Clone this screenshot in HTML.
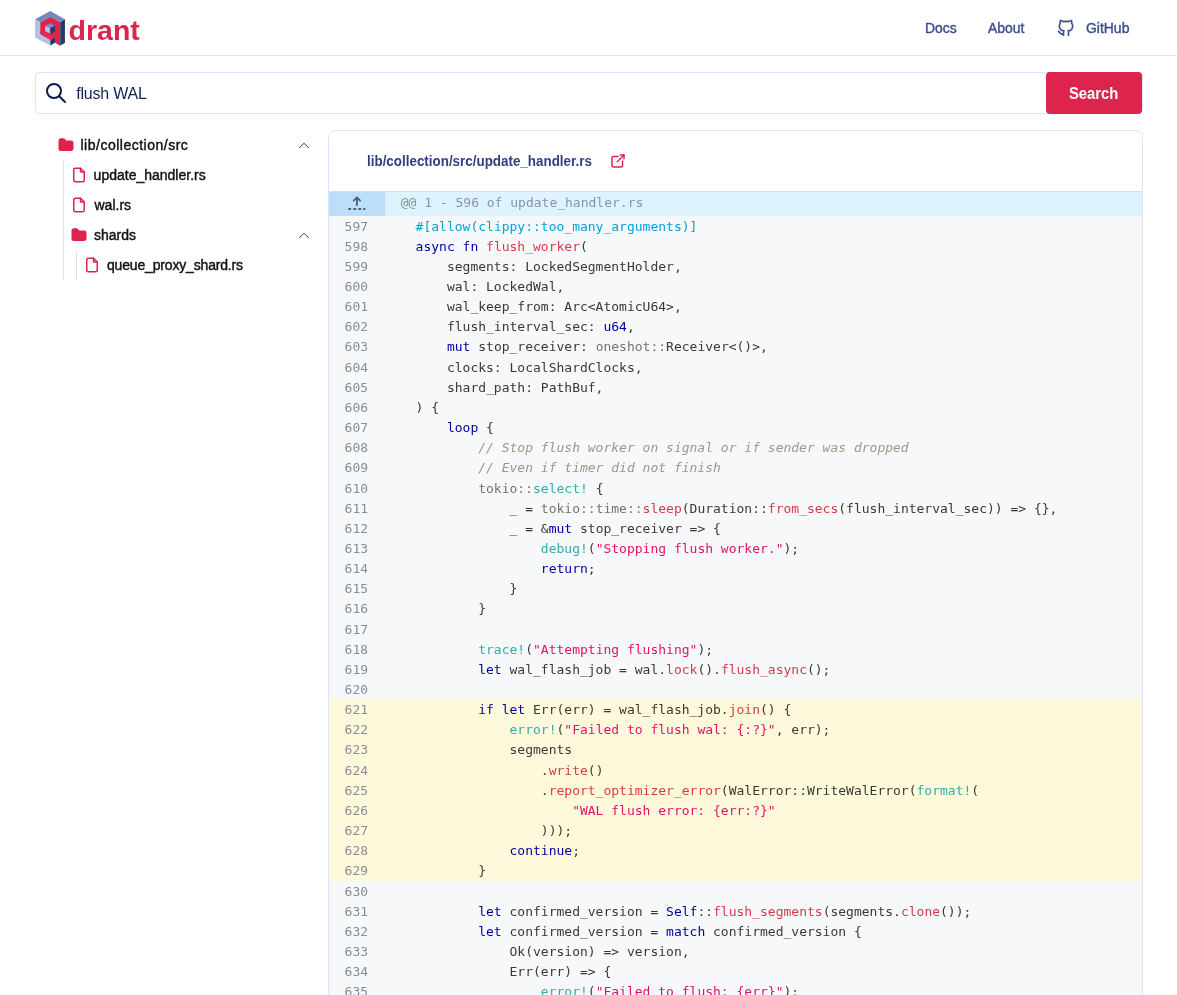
<!DOCTYPE html>
<html lang="en">
<head>
<meta charset="utf-8">
<title>Qdrant Code Search</title>
<style>
*{box-sizing:border-box;margin:0;padding:0}
html,body{width:1177px;height:995px;overflow:hidden;background:#fff}
body{font-family:"Liberation Sans",sans-serif;color:#111827;position:relative;will-change:transform;-webkit-font-smoothing:antialiased}
a{text-decoration:none;color:inherit}
/* header */
.hdr{position:absolute;left:0;top:0;width:1177px;height:56px;border-bottom:1px solid #dbe4ff;background:#fff}
.logo{position:absolute;left:35px;top:10px;width:110px;height:38px}
.logo svg{position:absolute;left:0;top:0}
.logo .wm{position:absolute;left:33.6px;top:6.2px;font-size:28.5px;line-height:28px;font-weight:700;color:#dc244c;letter-spacing:0}
.nav a{position:absolute;top:17.7px;height:20px;line-height:20px;font-size:14.6px;transform-origin:0 50%;transform:scaleX(.955);color:#39508d;-webkit-text-stroke:0.4px #39508d;white-space:nowrap}
.nav svg{position:absolute}
/* search */
.sbox{position:absolute;left:35px;top:72px;width:1108px;height:42px;border:1px solid #dbe4ff;border-radius:4px;background:#fff}
.sbox svg{position:absolute;left:8px;top:8px}
.sbox .q{position:absolute;left:40.2px;top:10.2px;font-size:16px;line-height:22px;color:#102252;white-space:nowrap;letter-spacing:-0.2px}
.sbtn{position:absolute;left:1046px;top:72px;width:96px;height:42px;background:#dc244c;border-radius:4px;color:#fff;font-weight:700;font-size:16px;line-height:42px;text-align:center}
.sbtn span{display:inline-block;transform:scaleX(.925);position:relative;top:1px}
/* tree */
.tree{position:absolute;left:35px;top:130px;width:290px;height:160px;font-size:14px;color:#111}
.tree .row{position:absolute;height:30px;line-height:30px;white-space:nowrap;-webkit-text-stroke:0.42px #111}
.tree .row svg{position:absolute;top:8px}
.tree .chev{position:absolute}
.tree .vline{position:absolute;width:1px;background:#dee2e6}
/* panel */
.panel{position:absolute;left:328px;top:130px;width:815px;height:900px;border:1px solid #dbe4ff;border-radius:8px;background:#fff;overflow:hidden}
.ptitle{position:absolute;left:38.4px;top:20px;transform-origin:0 50%;transform:scaleX(.957);font-size:14px;line-height:20px;font-weight:700;color:#2f3f86;white-space:nowrap}
.pext{position:absolute;left:279.5px;top:21px}
.exp{position:absolute;left:0;top:60px;width:813px;height:25px;background:#ddf4ff;border-top:1px solid #d0def7}
.exp .btn{position:absolute;left:0;top:0;width:56px;height:24px;background:#bbdefb}
.exp .txt{position:absolute;left:71.7px;top:1px;font:13px/20.15px "DejaVu Sans Mono","Liberation Mono",monospace;color:#8b949e;white-space:pre}
.code{position:absolute;left:0;top:85px;width:813px;height:820px;background:#f6f8fa;font:13px/20.15px "DejaVu Sans Mono","Liberation Mono",monospace;color:#393a34}
.code .hl{position:absolute;left:0;top:483px;width:813px;height:182px;background:#fff9db}
.code .ln{position:absolute;left:0;top:1px;width:56px;text-align:left;padding-left:15.6px;color:#868e96;white-space:pre}
.lines{position:absolute;left:0;top:0;width:813px}
.l{height:21px;white-space:pre;position:absolute;left:0;width:813px}
.l .no{position:absolute;left:15.6px;top:1px;color:#868e96}
.l .cd{position:absolute;left:55.3px;top:1px}
.k{color:#00009f}.f{color:#d73a49}.s{color:#e3116c}.m{color:#36acaa}.a{color:#00a4db}.c{color:#999988;font-style:italic}.n{opacity:.7}
</style>
</head>
<body>
<div class="hdr">
  <div class="logo">
    <svg width="34" height="38" viewBox="0 0 34 38"><defs><linearGradient id="lgA" x1="0" y1="0" x2="1" y2="0"><stop offset="0.2" stop-color="#dc244c"/><stop offset="1" stop-color="#ff2d5f"/></linearGradient><linearGradient id="lgB" x1="0" y1="0" x2="1" y2="0"><stop offset="0" stop-color="#ff2d5f"/><stop offset="0.8" stop-color="#dc244c"/></linearGradient></defs><polygon fill="#dc244c" points="15.30,6.80 25.22,12.00 25.22,35.84 20.02,32.77 20.02,27.11 15.30,30.17 5.15,24.27 5.15,12.23"/><polygon fill="url(#lgA)" points="5.15,20.50 15.30,26.40 15.30,30.17 5.15,24.27"/><polygon fill="url(#lgB)" points="15.30,26.40 20.02,23.56 20.02,27.11 15.30,30.17"/><polygon fill="#7589be" points="0.10,9.16 15.30,0.90 29.94,9.16 25.22,12.00 15.30,6.80 5.15,12.23"/><polygon fill="#b2bfe8" points="0.10,9.16 5.15,12.23 5.15,24.27 15.30,30.17 15.30,35.60 0.10,27.58"/><polygon fill="#24386c" points="25.22,12.00 29.94,9.16 29.94,32.77 25.22,35.84"/><polygon fill="#7589be" points="15.30,12.94 20.02,15.77 15.30,18.37 10.11,15.77"/><polygon fill="#b2bfe8" points="10.11,15.77 15.30,18.37 15.30,23.80 10.11,21.20"/><polygon fill="#24386c" points="15.30,18.37 20.02,15.77 20.02,21.44 15.30,23.80"/><polygon fill="#24386c" points="15.30,30.17 20.02,27.11 20.02,32.77 15.30,35.60"/></svg>
    <span class="wm">drant</span>
  </div>
  <div class="nav">
    <a style="left:924.6px">Docs</a>
    <a style="left:988.3px">About</a>
    <svg style="left:1056px;top:18px" width="20" height="20" viewBox="0 0 24 24" fill="none" stroke="#39508d" stroke-width="2" stroke-linecap="round" stroke-linejoin="round"><path d="M9 19c-4.3 1.4 -4.3 -2.500 -6 -3m12 5v-3.500c0 -1 .100 -1.400 -.500 -2c2.800 -.300 5.500 -1.400 5.500 -6a4.600 4.600 0 0 0 -1.300 -3.200a4.200 4.200 0 0 0 -.100 -3.200s-1.100 -.300 -3.500 1.300a12.300 12.300 0 0 0 -6.200 0c-2.400 -1.600 -3.500 -1.300 -3.500 -1.300a4.200 4.200 0 0 0 -.100 3.200a4.600 4.600 0 0 0 -1.300 3.200c0 4.600 2.700 5.700 5.500 6c-.600 .600 -.600 1.200 -.500 2v3.500"/></svg><a style="left:1086.2px">GitHub</a>
  </div>
</div>
<div class="sbox">
  <svg width="24" height="24" viewBox="0 0 24 24" fill="none" stroke="#0f1b4d" stroke-width="2" stroke-linecap="round" stroke-linejoin="round"><circle cx="10" cy="10" r="7"/><path d="M21 21l-6 -6"/></svg>
  <span class="q">flush WAL</span>
</div>
<div class="sbtn"><span>Search</span></div>
<div class="tree">
  <div class="vline" style="left:28px;top:30px;height:120px"></div>
  <div class="vline" style="left:41px;top:120px;height:30px"></div>
  <div class="row" style="left:0;top:0;width:290px"><svg style="left:22px;top:6px" width="18" height="18" viewBox="0 0 24 24" fill="#dc244c"><path d="M9 3a1 1 0 0 1 .608 .206l.1 .087l2.706 2.707h6.586a3 3 0 0 1 2.995 2.824l.005 .176v8a3 3 0 0 1 -2.824 2.995l-.176 .005h-14a3 3 0 0 1 -2.995 -2.824l-.005 -.176v-11a3 3 0 0 1 2.824 -2.995l.176 -.005h4z"/></svg><span style="position:absolute;left:45.5px;letter-spacing:.5px">lib/collection/src</span></div><svg class="chev" style="left:263px;top:11px" width="12" height="8" viewBox="0 0 12 8" fill="none" stroke="#333" stroke-width="1" stroke-linecap="round" stroke-linejoin="round"><path d="M1.5 6.7L6 2.2L10.5 6.7"/></svg>
  <div class="row" style="left:0;top:30px;width:290px"><svg style="left:35px;top:6px" width="18" height="18" viewBox="0 0 24 24" fill="none" stroke="#dc244c" stroke-width="2" stroke-linecap="round" stroke-linejoin="round"><path d="M14 3v4a1 1 0 0 0 1 1h4"/><path d="M17 21h-10a2 2 0 0 1 -2 -2v-14a2 2 0 0 1 2 -2h7l5 5v11a2 2 0 0 1 -2 2z"/></svg><span style="position:absolute;left:58.6px">update_handler.rs</span></div>
  <div class="row" style="left:0;top:60px;width:290px"><svg style="left:35px;top:6px" width="18" height="18" viewBox="0 0 24 24" fill="none" stroke="#dc244c" stroke-width="2" stroke-linecap="round" stroke-linejoin="round"><path d="M14 3v4a1 1 0 0 0 1 1h4"/><path d="M17 21h-10a2 2 0 0 1 -2 -2v-14a2 2 0 0 1 2 -2h7l5 5v11a2 2 0 0 1 -2 2z"/></svg><span style="position:absolute;left:59.5px">wal.rs</span></div>
  <div class="row" style="left:0;top:90px;width:290px"><svg style="left:35px;top:6px" width="18" height="18" viewBox="0 0 24 24" fill="#dc244c"><path d="M9 3a1 1 0 0 1 .608 .206l.1 .087l2.706 2.707h6.586a3 3 0 0 1 2.995 2.824l.005 .176v8a3 3 0 0 1 -2.824 2.995l-.176 .005h-14a3 3 0 0 1 -2.995 -2.824l-.005 -.176v-11a3 3 0 0 1 2.824 -2.995l.176 -.005h4z"/></svg><span style="position:absolute;left:59px">shards</span></div><svg class="chev" style="left:263px;top:101px" width="12" height="8" viewBox="0 0 12 8" fill="none" stroke="#333" stroke-width="1" stroke-linecap="round" stroke-linejoin="round"><path d="M1.5 6.7L6 2.2L10.5 6.7"/></svg>
  <div class="row" style="left:0;top:120px;width:290px"><svg style="left:48px;top:6px" width="18" height="18" viewBox="0 0 24 24" fill="none" stroke="#dc244c" stroke-width="2" stroke-linecap="round" stroke-linejoin="round"><path d="M14 3v4a1 1 0 0 0 1 1h4"/><path d="M17 21h-10a2 2 0 0 1 -2 -2v-14a2 2 0 0 1 2 -2h7l5 5v11a2 2 0 0 1 -2 2z"/></svg><span style="position:absolute;left:72px;letter-spacing:-.17px">queue_proxy_shard.rs</span></div>
</div>
<div class="panel">
  <div class="ptitle">lib/collection/src/update_handler.rs</div>
  <svg class="pext" width="18" height="18" viewBox="0 0 24 24" fill="none" stroke="#dc244c" stroke-width="2" stroke-linecap="round" stroke-linejoin="round"><path d="M12 6h-6a2 2 0 0 0 -2 2v10a2 2 0 0 0 2 2h10a2 2 0 0 0 2 -2v-6"/><path d="M11 13l9 -9"/><path d="M15 4h5v5"/></svg>
  <div class="exp"><div class="btn"><svg style="position:absolute;left:0;top:0" width="56" height="24" viewBox="0 0 56 24" fill="none" stroke="#57606a" stroke-width="1.9" stroke-linecap="round" stroke-linejoin="round"><path d="M27.9 13V5.6M24.7 8.6L27.9 5.400l3.200 3.200"/><path d="M19.25 16.900h17" stroke-dasharray="2.900 2.100" stroke-linecap="butt" stroke-width="2"/></svg></div><div class="txt">@@ 1 - 596 of update_handler.rs</div></div>
  <div class="code">
    <div class="hl"></div>
    <div class="lines">
<div class="l" style="top:0px"><span class="no">597</span><span class="cd">    <span class="a">#[allow(clippy::too_many_arguments)]</span></span></div>
<div class="l" style="top:20px"><span class="no">598</span><span class="cd">    <span class="k">async</span> <span class="k">fn</span> <span class="f">flush_worker</span>(</span></div>
<div class="l" style="top:40px"><span class="no">599</span><span class="cd">        segments: LockedSegmentHolder,</span></div>
<div class="l" style="top:60px"><span class="no">600</span><span class="cd">        wal: LockedWal,</span></div>
<div class="l" style="top:80px"><span class="no">601</span><span class="cd">        wal_keep_from: Arc&lt;AtomicU64&gt;,</span></div>
<div class="l" style="top:100px"><span class="no">602</span><span class="cd">        flush_interval_sec: <span class="k">u64</span>,</span></div>
<div class="l" style="top:120px"><span class="no">603</span><span class="cd">        <span class="k">mut</span> stop_receiver: <span class="n">oneshot::</span>Receiver&lt;()&gt;,</span></div>
<div class="l" style="top:141px"><span class="no">604</span><span class="cd">        clocks: LocalShardClocks,</span></div>
<div class="l" style="top:161px"><span class="no">605</span><span class="cd">        shard_path: PathBuf,</span></div>
<div class="l" style="top:181px"><span class="no">606</span><span class="cd">    ) {</span></div>
<div class="l" style="top:201px"><span class="no">607</span><span class="cd">        <span class="k">loop</span> {</span></div>
<div class="l" style="top:221px"><span class="no">608</span><span class="cd">            <span class="c">// Stop flush worker on signal or if sender was dropped</span></span></div>
<div class="l" style="top:241px"><span class="no">609</span><span class="cd">            <span class="c">// Even if timer did not finish</span></span></div>
<div class="l" style="top:262px"><span class="no">610</span><span class="cd">            <span class="n">tokio::</span><span class="m">select!</span> {</span></div>
<div class="l" style="top:282px"><span class="no">611</span><span class="cd">                _ = <span class="n">tokio::time::</span><span class="f">sleep</span>(Duration::<span class="f">from_secs</span>(flush_interval_sec)) =&gt; {},</span></div>
<div class="l" style="top:302px"><span class="no">612</span><span class="cd">                _ = &amp;<span class="k">mut</span> stop_receiver =&gt; {</span></div>
<div class="l" style="top:322px"><span class="no">613</span><span class="cd">                    <span class="m">debug!</span>(<span class="s">"Stopping flush worker."</span>);</span></div>
<div class="l" style="top:342px"><span class="no">614</span><span class="cd">                    <span class="k">return</span>;</span></div>
<div class="l" style="top:362px"><span class="no">615</span><span class="cd">                }</span></div>
<div class="l" style="top:382px"><span class="no">616</span><span class="cd">            }</span></div>
<div class="l" style="top:403px"><span class="no">617</span><span class="cd"></span></div>
<div class="l" style="top:423px"><span class="no">618</span><span class="cd">            <span class="m">trace!</span>(<span class="s">"Attempting flushing"</span>);</span></div>
<div class="l" style="top:443px"><span class="no">619</span><span class="cd">            <span class="k">let</span> wal_flash_job = wal.<span class="f">lock</span>().<span class="f">flush_async</span>();</span></div>
<div class="l" style="top:463px"><span class="no">620</span><span class="cd"></span></div>
<div class="l" style="top:483px"><span class="no">621</span><span class="cd">            <span class="k">if</span> <span class="k">let</span> Err(err) = wal_flash_job.<span class="f">join</span>() {</span></div>
<div class="l" style="top:503px"><span class="no">622</span><span class="cd">                <span class="m">error!</span>(<span class="s">"Failed to flush wal: {:?}"</span>, err);</span></div>
<div class="l" style="top:523px"><span class="no">623</span><span class="cd">                segments</span></div>
<div class="l" style="top:544px"><span class="no">624</span><span class="cd">                    .<span class="f">write</span>()</span></div>
<div class="l" style="top:564px"><span class="no">625</span><span class="cd">                    .<span class="f">report_optimizer_error</span>(WalError::WriteWalError(<span class="m">format!</span>(</span></div>
<div class="l" style="top:584px"><span class="no">626</span><span class="cd">                        <span class="s">"WAL flush error: {err:?}"</span></span></div>
<div class="l" style="top:604px"><span class="no">627</span><span class="cd">                    )));</span></div>
<div class="l" style="top:624px"><span class="no">628</span><span class="cd">                <span class="k">continue</span>;</span></div>
<div class="l" style="top:644px"><span class="no">629</span><span class="cd">            }</span></div>
<div class="l" style="top:665px"><span class="no">630</span><span class="cd"></span></div>
<div class="l" style="top:685px"><span class="no">631</span><span class="cd">            <span class="k">let</span> confirmed_version = <span class="k">Self</span>::<span class="f">flush_segments</span>(segments.<span class="f">clone</span>());</span></div>
<div class="l" style="top:705px"><span class="no">632</span><span class="cd">            <span class="k">let</span> confirmed_version = <span class="k">match</span> confirmed_version {</span></div>
<div class="l" style="top:725px"><span class="no">633</span><span class="cd">                Ok(version) =&gt; version,</span></div>
<div class="l" style="top:745px"><span class="no">634</span><span class="cd">                Err(err) =&gt; {</span></div>
<div class="l" style="top:765px"><span class="no">635</span><span class="cd">                    <span class="m">error!</span>(<span class="s">"Failed to flush: {err}"</span>);</span></div>
<div class="l" style="top:785px"><span class="no">636</span><span class="cd">                    <span class="k">return</span>;</span></div>
</div>
  </div>
</div>
</body>
</html>
